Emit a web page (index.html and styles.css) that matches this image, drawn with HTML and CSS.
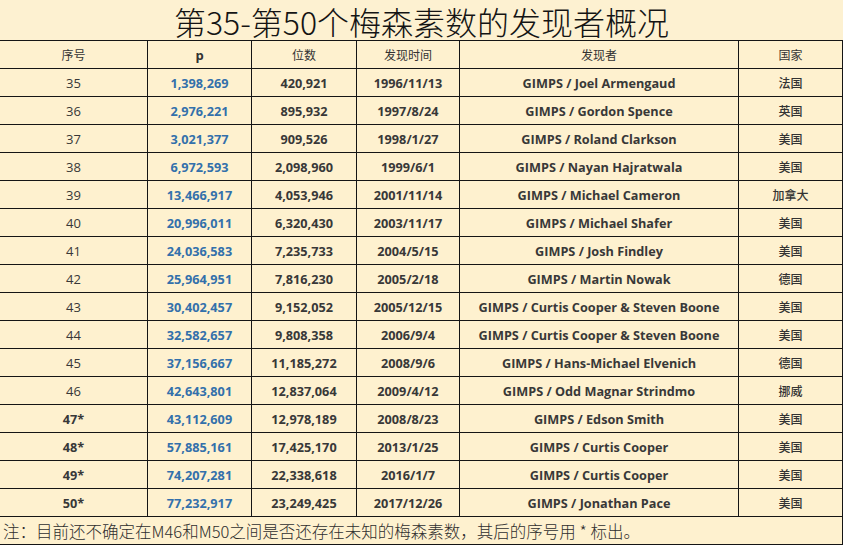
FILE: index.html
```html
<!DOCTYPE html>
<html lang="zh-CN">
<head>
<meta charset="utf-8">
<title>第35-第50个梅森素数的发现者概况</title>
<link rel="stylesheet" href="styles.css">
</head>
<body>
<div class="page">
  <h1 class="title">第35-第50个梅森素数的发现者概况</h1>
  <div class="grid">
    <div class="cell head">序号</div>
    <div class="cell head latin">p</div>
    <div class="cell head">位数</div>
    <div class="cell head">发现时间</div>
    <div class="cell head">发现者</div>
    <div class="cell head">国家</div>

    <div class="cell num">35</div><div class="cell p">1,398,269</div><div class="cell b">420,921</div><div class="cell b">1996/11/13</div><div class="cell b">GIMPS / Joel Armengaud</div><div class="cell c">法国</div>
    <div class="cell num">36</div><div class="cell p">2,976,221</div><div class="cell b">895,932</div><div class="cell b">1997/8/24</div><div class="cell b">GIMPS / Gordon Spence</div><div class="cell c">英国</div>
    <div class="cell num">37</div><div class="cell p">3,021,377</div><div class="cell b">909,526</div><div class="cell b">1998/1/27</div><div class="cell b">GIMPS / Roland Clarkson</div><div class="cell c">美国</div>
    <div class="cell num">38</div><div class="cell p">6,972,593</div><div class="cell b">2,098,960</div><div class="cell b">1999/6/1</div><div class="cell b">GIMPS / Nayan Hajratwala</div><div class="cell c">美国</div>
    <div class="cell num">39</div><div class="cell p">13,466,917</div><div class="cell b">4,053,946</div><div class="cell b">2001/11/14</div><div class="cell b">GIMPS / Michael Cameron</div><div class="cell c">加拿大</div>
    <div class="cell num">40</div><div class="cell p">20,996,011</div><div class="cell b">6,320,430</div><div class="cell b">2003/11/17</div><div class="cell b">GIMPS / Michael Shafer</div><div class="cell c">美国</div>
    <div class="cell num">41</div><div class="cell p">24,036,583</div><div class="cell b">7,235,733</div><div class="cell b">2004/5/15</div><div class="cell b">GIMPS / Josh Findley</div><div class="cell c">美国</div>
    <div class="cell num">42</div><div class="cell p">25,964,951</div><div class="cell b">7,816,230</div><div class="cell b">2005/2/18</div><div class="cell b">GIMPS / Martin Nowak</div><div class="cell c">德国</div>
    <div class="cell num">43</div><div class="cell p">30,402,457</div><div class="cell b">9,152,052</div><div class="cell b">2005/12/15</div><div class="cell b">GIMPS / Curtis Cooper &amp; Steven Boone</div><div class="cell c">美国</div>
    <div class="cell num">44</div><div class="cell p">32,582,657</div><div class="cell b">9,808,358</div><div class="cell b">2006/9/4</div><div class="cell b">GIMPS / Curtis Cooper &amp; Steven Boone</div><div class="cell c">美国</div>
    <div class="cell num">45</div><div class="cell p">37,156,667</div><div class="cell b">11,185,272</div><div class="cell b">2008/9/6</div><div class="cell b">GIMPS / Hans-Michael Elvenich</div><div class="cell c">德国</div>
    <div class="cell num">46</div><div class="cell p">42,643,801</div><div class="cell b">12,837,064</div><div class="cell b">2009/4/12</div><div class="cell b">GIMPS / Odd Magnar Strindmo</div><div class="cell c">挪威</div>
    <div class="cell b">47*</div><div class="cell p">43,112,609</div><div class="cell b">12,978,189</div><div class="cell b">2008/8/23</div><div class="cell b">GIMPS / Edson Smith</div><div class="cell c">美国</div>
    <div class="cell b">48*</div><div class="cell p">57,885,161</div><div class="cell b">17,425,170</div><div class="cell b">2013/1/25</div><div class="cell b">GIMPS / Curtis Cooper</div><div class="cell c">美国</div>
    <div class="cell b">49*</div><div class="cell p">74,207,281</div><div class="cell b">22,338,618</div><div class="cell b">2016/1/7</div><div class="cell b">GIMPS / Curtis Cooper</div><div class="cell c">美国</div>
    <div class="cell b">50*</div><div class="cell p">77,232,917</div><div class="cell b">23,249,425</div><div class="cell b">2017/12/26</div><div class="cell b">GIMPS / Jonathan Pace</div><div class="cell c">美国</div>

    <div class="cell note">注：目前还不确定在M46和M50之间是否还存在未知的梅森素数，其后的序号用 * 标出。</div>
  </div>
</div>
</body>
</html>
```

FILE: styles.css
```css
html, body {
  margin: 0;
  padding: 0;
  background: #fdf1d1;
}

.page {
  width: 843px;
  height: 545px;
  overflow: hidden;
  background: #fdf1d1;
  font-family: "Open Sans", "Noto Sans CJK SC", sans-serif;
  color: #333;
}

.title {
  margin: 0;
  box-sizing: border-box;
  height: 40px;
  padding-top: 2px;
  line-height: 38px;
  text-align: center;
  font-family: "Noto Sans CJK SC", sans-serif;
  font-weight: 300;
  font-size: 32px;
  color: #141414;
  overflow: visible;
}

.grid {
  display: grid;
  grid-template-columns: 148px 104px 105px 103px 279px 104px;
  grid-auto-rows: 28px;
  border-top: 1px solid #151515;
}

.cell {
  box-sizing: border-box;
  border-right: 1px solid #151515;
  border-bottom: 1px solid #151515;
  display: flex;
  align-items: center;
  justify-content: center;
  font-size: 12px;
  white-space: nowrap;
  background: #fef1cf;
}

.head {
  font-family: "Noto Sans CJK SC", sans-serif;
  font-weight: 400;
  color: #333;
}

.head.latin {
  font-family: "Open Sans", sans-serif;
  font-weight: 700;
  font-size: 13px;
}

.num {
  font-size: 13px;
  font-weight: 400;
  color: #383838;
}

.b {
  font-size: 12.7px;
  font-weight: 700;
  color: #383838;
}

.p {
  font-size: 12.7px;
  font-weight: 700;
  color: #3370ab;
}

.c {
  font-family: "Noto Sans CJK SC", sans-serif;
  font-weight: 500;
  color: #333;
}

.note {
  grid-column: 1 / -1;
  justify-content: flex-start;
  padding-left: 3px;
  font-family: "Noto Sans CJK SC", sans-serif;
  font-weight: 300;
  font-size: 16.5px;
  color: #2e2e2e;
}
```
